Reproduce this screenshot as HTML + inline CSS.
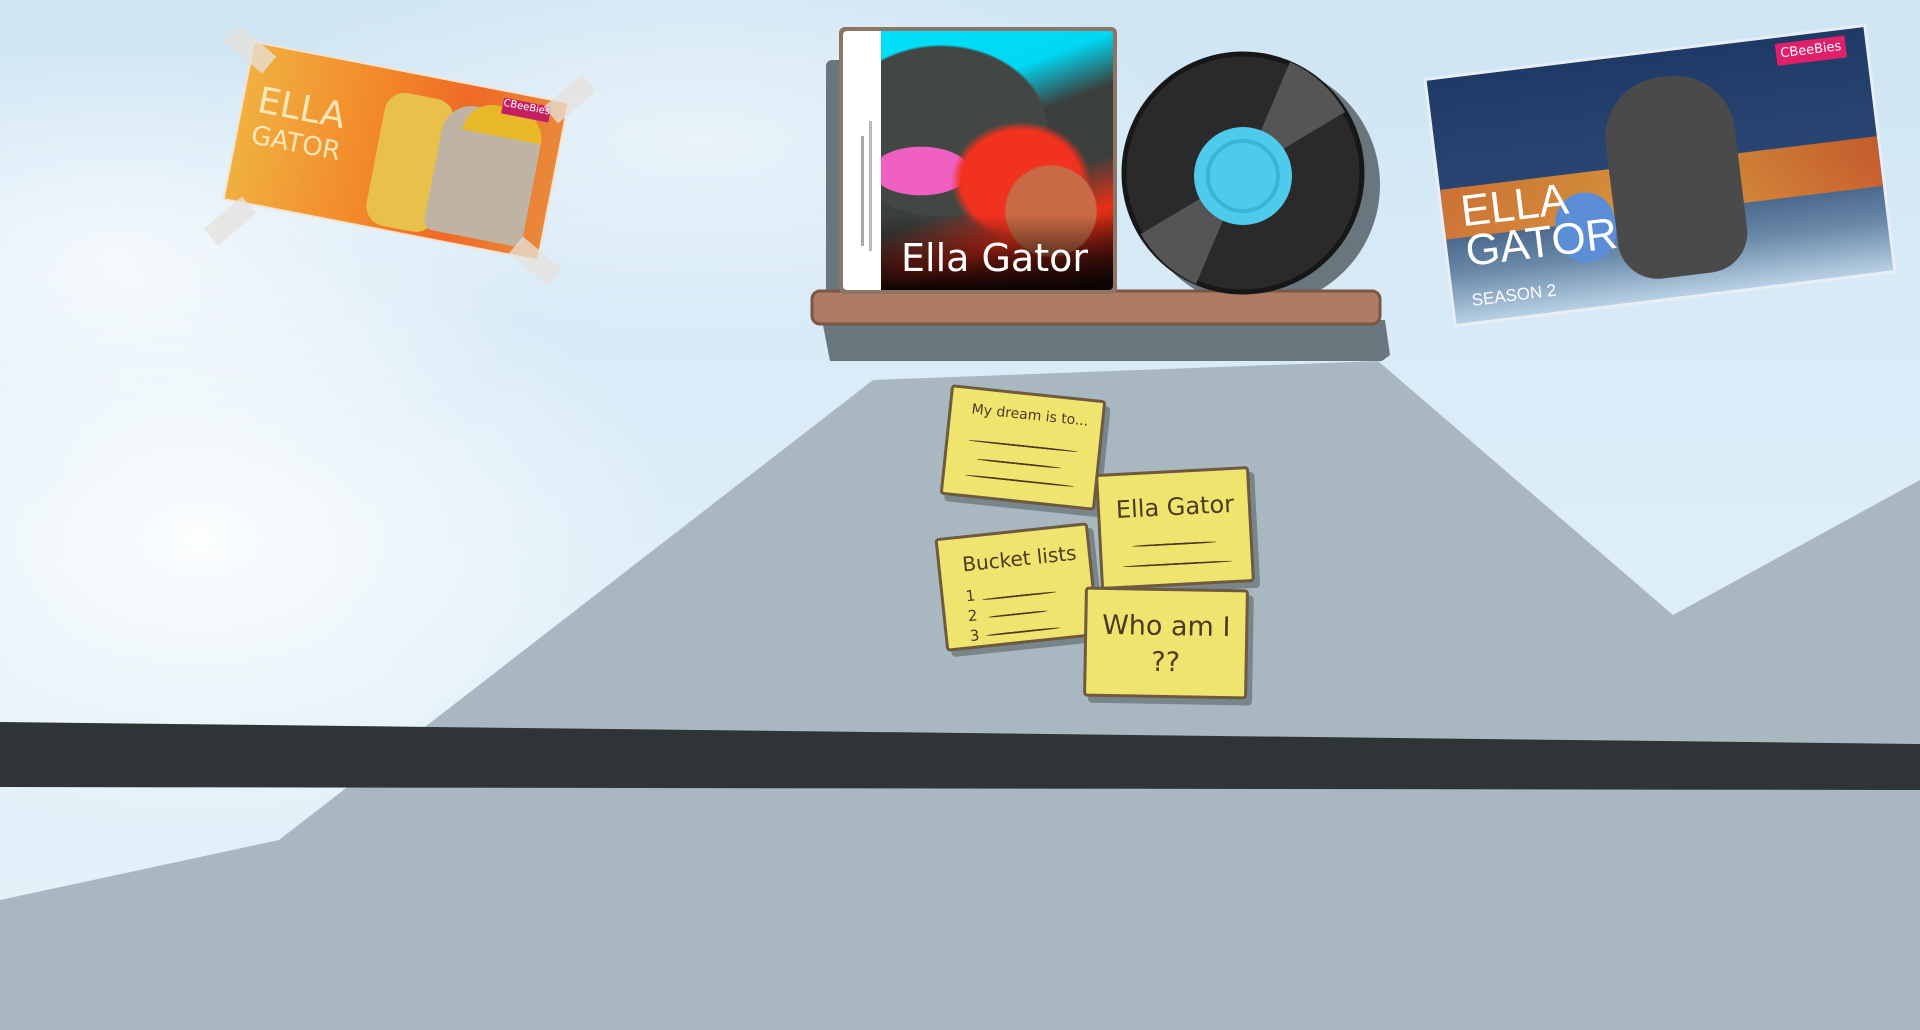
<!DOCTYPE html>
<html><head><meta charset="utf-8"><style>
html,body{margin:0;padding:0}
body{width:1920px;height:1030px;overflow:hidden;position:relative;font-family:"DejaVu Sans","Liberation Sans",sans-serif;
background:
radial-gradient(ellipse 480px 300px at 200px 540px,rgba(255,255,255,.9),rgba(255,255,255,0)),
radial-gradient(ellipse 420px 220px at 120px 260px,rgba(255,255,255,.75),rgba(255,255,255,0)),
radial-gradient(ellipse 500px 200px at 700px 140px,rgba(255,255,255,.5),rgba(255,255,255,0)),
linear-gradient(180deg,#cfe5f4 0%,#dcedf8 45%,#e6f2f9 100%);}
.abs{position:absolute}
.note{position:absolute;background:#efe46e;border:3px solid #6e5a3e;border-radius:4px;box-shadow:5px 6px 0 rgba(60,70,75,.45);color:#4a3a22}
.note .l{position:absolute;height:0;border-top:2px solid #4a3a22;border-radius:50%}
</style></head><body>
<svg class="abs" style="left:0;top:0" width="1920" height="1030">
<polygon points="0,900 279,840 873,380 1378,361 1673,615 1920,480 1920,1030 0,1030" fill="#a9b8c0"/>
<polygon points="0,722 1920,744 1920,790 0,787" fill="#2f3437"/>
<!-- shelf shadow -->
<polygon points="822,320 1385,320 1390,355 1382,361 830,361" fill="#6a767d"/>
<rect x="826" y="60" width="280" height="262" rx="6" fill="#6a767d"/>
<ellipse cx="1258" cy="185" rx="122" ry="122" fill="#6a767d"/>
<rect x="812" y="291" width="568" height="33" rx="8" fill="#ae7b64" stroke="#7b5648" stroke-width="3"/>
<!-- vinyl -->
<circle cx="1243" cy="173" r="119" fill="#2a2a2a" stroke="#171717" stroke-width="5"/>
<path d="M1243,173 L1290,62 A119,119 0 0 1 1345,112 Z" fill="#555"/>
<path d="M1243,173 L1196,284 A119,119 0 0 1 1141,234 Z" fill="#555"/>
<circle cx="1243" cy="176" r="49" fill="#4ecbeb"/>
<circle cx="1243" cy="176" r="35" fill="none" stroke="#3bb3d6" stroke-width="4"/>
</svg>
<!-- album -->
<div class="abs" style="left:839px;top:27px;width:278px;height:267px;background:#8d7566;border-radius:6px;padding:4px;box-sizing:border-box">
 <div style="position:relative;width:100%;height:100%;background:#fff;border-radius:4px;overflow:hidden">
  <div class="abs" style="left:18px;top:105px;width:3px;height:110px;background:#aaa"></div>
  <div class="abs" style="left:26px;top:90px;width:3px;height:130px;background:#bbb"></div>
  <div class="abs" style="left:38px;top:0;right:0;bottom:0;background:
   radial-gradient(ellipse 75px 75px at 170px 180px,#c86a45 60%,transparent 62%),
   radial-gradient(ellipse 100px 85px at 140px 150px,#f0321e 60%,transparent 70%),
   radial-gradient(ellipse 60px 30px at 40px 140px,#f060c0 80%,transparent 82%),
   radial-gradient(ellipse 150px 120px at 60px 100px,#434743 70%,transparent 72%),
   linear-gradient(160deg,#00e0f8 0%,#00d8f4 25%,#3b3f3c 40%,#3b3f3c 60%,#e83018 75%,#200805 100%);">
   <div class="abs" style="left:0;right:0;bottom:0;height:75px;background:linear-gradient(transparent,#0c0404)"></div>
   <div class="abs" style="left:20px;bottom:10px;color:#fff;font-size:38px;white-space:nowrap">Ella Gator</div>
  </div>
 </div>
</div>
<!-- left poster -->
<div class="abs" style="left:237px;top:72px;width:318px;height:158px;transform:rotate(11deg);background:linear-gradient(90deg,#f0b040 0%,#f28a2a 40%,#ef6a26 70%,#e9883a 100%);box-shadow:0 0 0 2px #f4e3d0">
 <div class="abs" style="left:140px;top:20px;width:70px;height:135px;background:#e8c04a;border-radius:20px"></div>
 <div class="abs" style="left:200px;top:20px;width:100px;height:130px;background:#bfb4a4;border-radius:30px 30px 10px 10px"></div>
 <div class="abs" style="left:220px;top:15px;width:80px;height:30px;background:#e9b828;border-radius:40px 40px 0 0"></div>
 <div class="abs" style="left:255px;top:6px;width:48px;height:16px;background:#c22060;color:#fff;font-size:10px;text-align:center">CBeeBies</div>
 <div class="abs" style="left:14px;top:40px;color:#fff4d0;font-size:36px;line-height:32px;opacity:.85">ELLA<br><span style="font-size:26px">GATOR</span></div>
</div>
<div class="abs" style="left:225px;top:38px;width:50px;height:22px;background:rgba(230,225,220,.75);transform:rotate(40deg)"></div>
<div class="abs" style="left:545px;top:88px;width:50px;height:22px;background:rgba(230,225,220,.75);transform:rotate(-40deg)"></div>
<div class="abs" style="left:205px;top:210px;width:50px;height:22px;background:rgba(230,225,220,.75);transform:rotate(-40deg)"></div>
<div class="abs" style="left:510px;top:250px;width:50px;height:22px;background:rgba(230,225,220,.75);transform:rotate(40deg)"></div>
<!-- right poster -->
<div class="abs" style="left:1440px;top:53px;width:440px;height:245px;transform:rotate(-7deg);background:linear-gradient(180deg,#1f3a66 0%,#2a4672 50%,#6a8aa8 80%,#b8d0e4 100%);box-shadow:0 0 0 3px #e8eef4;overflow:hidden">
 <div class="abs" style="left:0;top:110px;width:440px;height:50px;background:linear-gradient(90deg,#e87a2a,#f0a030,#e06020);opacity:.85"></div>
 <div class="abs" style="left:170px;top:25px;width:130px;height:200px;background:#4a4a4a;border-radius:60px 60px 40px 40px"></div>
 <div class="abs" style="left:110px;top:130px;width:60px;height:70px;background:#5c8ed8;border-radius:30px"></div>
 <div class="abs" style="left:350px;top:6px;width:70px;height:22px;background:#e0206a;color:#fff;font-size:13px;text-align:center;line-height:22px">CBeeBies</div>
 <div class="abs" style="left:18px;top:115px;color:#fff;font-size:44px;line-height:40px;font-family:'Liberation Sans Narrow','Liberation Sans',sans-serif">ELLA<br>GATOR<br><span style="font-size:17px;line-height:18px">SEASON 2</span></div>
</div>
<!-- notes -->
<div class="note" style="left:945px;top:392px;width:150px;height:105px;transform:rotate(6deg)">
 <div class="abs" style="left:20px;top:12px;font-size:14px">My dream is to...</div>
 <div class="l" style="left:20px;top:50px;width:110px"></div>
 <div class="l" style="left:30px;top:68px;width:85px"></div>
 <div class="l" style="left:20px;top:85px;width:110px"></div>
</div>
<div class="note" style="left:1098px;top:470px;width:148px;height:110px;transform:rotate(-3deg)">
 <div class="abs" style="left:16px;top:20px;font-size:24px">Ella Gator</div>
 <div class="l" style="left:30px;top:70px;width:85px"></div>
 <div class="l" style="left:20px;top:90px;width:110px"></div>
</div>
<div class="note" style="left:940px;top:530px;width:148px;height:108px;transform:rotate(-6deg)">
 <div class="abs" style="left:22px;top:14px;font-size:20px">Bucket lists</div>
 <div class="abs" style="left:22px;top:48px;font-size:15px;line-height:20px">1<br>2<br>3</div>
 <div class="l" style="left:38px;top:62px;width:75px"></div>
 <div class="l" style="left:42px;top:80px;width:60px"></div>
 <div class="l" style="left:38px;top:98px;width:75px"></div>
</div>
<div class="note" style="left:1084px;top:588px;width:158px;height:104px;transform:rotate(1deg)">
 <div class="abs" style="left:0;right:0;top:18px;font-size:27px;text-align:center;line-height:36px">Who am I<br>??</div>
</div>
</body></html>
